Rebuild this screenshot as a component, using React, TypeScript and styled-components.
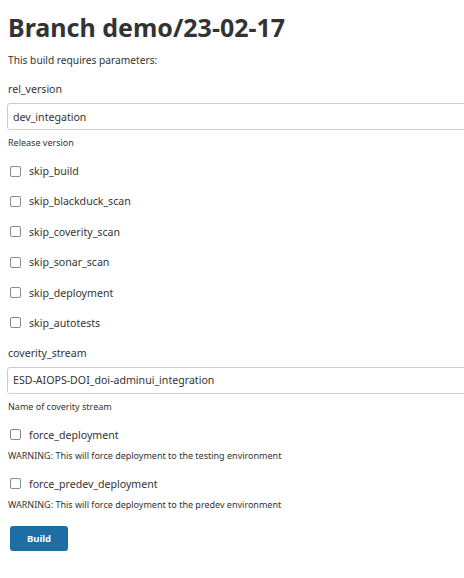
import React from "react";
import styled, { createGlobalStyle } from "styled-components";

const Global = createGlobalStyle`
  html, body { margin: 0; padding: 0; background: #fff; overflow: hidden; }
  body { font-family: "Noto Sans", "Open Sans", sans-serif; color: #333; }
`;

const Page = styled.div`
  padding: 0 0 0 8px;
  width: 700px;
`;

const Title = styled.h1`
  margin: 0;
  padding-top: 10px;
  font-size: 25px;
  font-weight: 700;
  line-height: 34px;
  color: #333;
`;

const Intro = styled.p`
  margin: 9px 0 0;
  font-size: 10.2px;
  line-height: 15px;
`;

const Param = styled.div<{ $top: number }>`
  margin-top: ${(p) => p.$top}px;
`;

const Label = styled.div`
  font-size: 10.6px;
  line-height: 16px;
  color: #333;
`;

const TextInput = styled.input`
  display: block;
  box-sizing: border-box;
  margin: 6px 0 0 -1px;
  width: 640px;
  height: 27px;
  border: 1px solid #ccc;
  border-radius: 3px;
  padding: 0 5px;
  font-family: inherit;
  font-size: 10.6px;
  color: #333;
  outline: none;
`;

const Help = styled.div`
  margin-top: 6px;
  font-size: 9px;
  line-height: 13px;
  color: #333;
`;

const CheckRow = styled.label`
  display: flex;
  align-items: center;
  gap: 8px;
  font-size: 10.6px;
  line-height: 16px;
  color: #333;
  padding-left: 2px;
`;

const Box = styled.span`
  display: inline-block;
  width: 9px;
  height: 9px;
  border: 1px solid #8a8a8a;
  border-radius: 2px;
  background: #fff;
`;

const Button = styled.button`
  display: block;
  margin: 15px 0 0 2px;
  width: 58px;
  height: 25px;
  background: #1d6ea5;
  color: #fff;
  border: none;
  border-radius: 3px;
  font-family: inherit;
  font-size: 9.5px;
  font-weight: 700;
`;

const checks = [
  "skip_build",
  "skip_blackduck_scan",
  "skip_coverity_scan",
  "skip_sonar_scan",
  "skip_deployment",
  "skip_autotests",
];

export default function App() {
  return (
    <>
      <Global />
      <Page>
        <Title>Branch demo/23-02-17</Title>
        <Intro>This build requires parameters:</Intro>
        <Param $top={13}>
          <Label>rel_version</Label>
          <TextInput defaultValue="dev_integation" />
          <Help>Release version</Help>
        </Param>
        {checks.map((c, i) => (
          <Param key={c} $top={i === 0 ? 14 : 14.4}>
            <CheckRow>
              <Box />
              {c}
            </CheckRow>
          </Param>
        ))}
        <Param $top={14}>
          <Label>coverity_stream</Label>
          <TextInput defaultValue="ESD-AIOPS-DOI_doi-adminui_integration" />
          <Help>Name of coverity stream</Help>
        </Param>
        <Param $top={14}>
          <CheckRow>
            <Box />
            force_deployment
          </CheckRow>
          <Help>WARNING: This will force deployment to the testing environment</Help>
        </Param>
        <Param $top={14}>
          <CheckRow>
            <Box />
            force_predev_deployment
          </CheckRow>
          <Help>WARNING: This will force deployment to the predev environment</Help>
        </Param>
        <Button>Build</Button>
      </Page>
    </>
  );
}
